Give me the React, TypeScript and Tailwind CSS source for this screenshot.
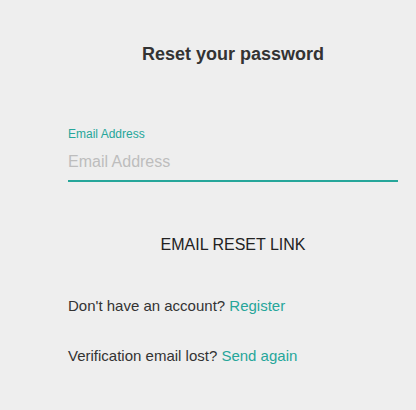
import React, { useState } from 'react';

const App = () => {
  const [email, setEmail] = useState('');

  return (
    <div
      className="min-h-[410px] w-full bg-[#eeeeee] pl-[68px] pr-[18px] text-[#333333]"
      style={{ fontFamily: '"Liberation Sans", Arial, sans-serif' }}
    >
      <h1 className="pt-[44px] text-center text-[18px] font-bold leading-[20px] text-[#333333]">
        Reset your password
      </h1>

      <form className="mt-[62px]" onSubmit={(e) => e.preventDefault()}>
        <label htmlFor="email" className="block text-[12px] leading-[16px] text-[#26a69a]">
          Email Address
        </label>
        <input
          id="email"
          type="email"
          placeholder="Email Address"
          value={email}
          onChange={(e) => setEmail(e.target.value)}
          className="mt-[8px] block h-[32px] w-full border-b-2 border-[#26a69a] bg-transparent pb-[6px] text-[16px] leading-[24px] text-[#333333] outline-none placeholder:text-[#bdbdbd]"
        />

        <div className="mt-[51px] flex justify-center">
          <button
            type="submit"
            className="text-[16px] uppercase leading-[24px] text-[#222222]"
          >
            Email reset link
          </button>
        </div>
      </form>

      <p className="mt-[38px] text-[15px] leading-[22px] text-[#333333]">
        Don't have an account?{' '}
        <a href="#" className="text-[#26a69a]">
          Register
        </a>
      </p>
      <p className="mt-[28px] text-[15px] leading-[22px] text-[#333333]">
        Verification email lost?{' '}
        <a href="#" className="text-[#26a69a]">
          Send again
        </a>
      </p>
    </div>
  );
};

export default App;
